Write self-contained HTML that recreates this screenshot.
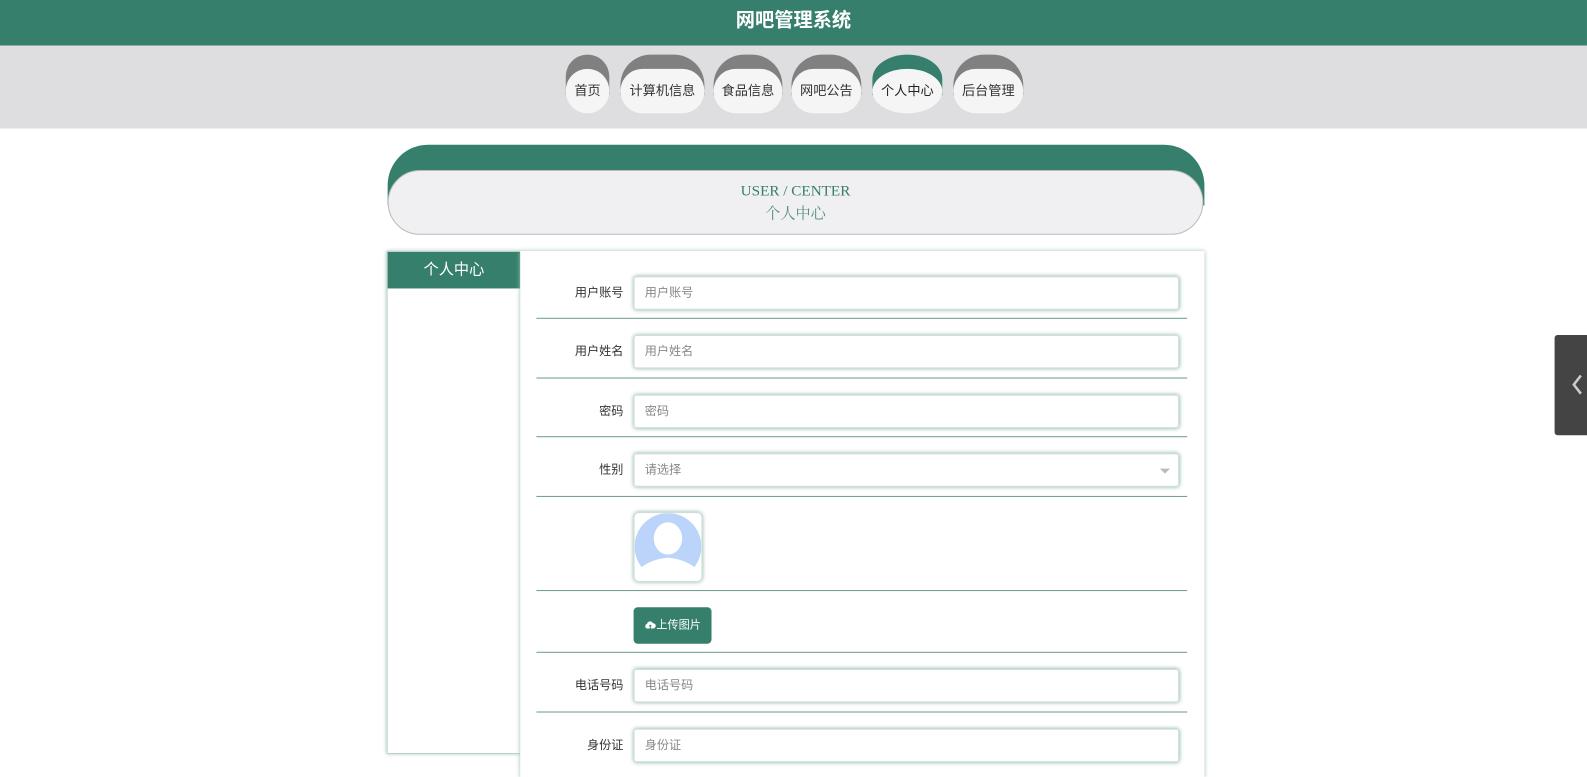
<!DOCTYPE html>
<html><head><meta charset="utf-8"><style>
*{box-sizing:border-box;margin:0;padding:0}
body{width:1587px;height:761px;overflow:hidden;background:#fff;font-family:"Liberation Sans","Noto Sans CJK SC",sans-serif;position:relative}
#w{position:absolute;left:0;top:0;width:1568px;height:752px;transform:scale(1.0121);transform-origin:0 0}
.hdr{position:absolute;left:0;top:0;width:1568px;height:45px;background:#357f6c;color:#fff;font-size:19px;font-weight:bold;text-align:center;line-height:42px}
.nav{position:absolute;left:0;top:45px;width:1568px;height:82px;background:#dedde0}
.tab{position:absolute;top:9px;height:58px}
.tab .bg{position:absolute;left:0;top:0;right:0;height:40px;background:#808080;border-radius:30px 30px 0 0}
.tab .pill{position:absolute;left:0;right:0;top:14px;height:44px;background:#f5f5f5;border-radius:22px;font-size:13px;color:#333;text-align:center;line-height:44px}
.tab.act .bg{background:#357f6c;border-radius:50%/60% 60% 0 0}
.tab.act .pill{border-radius:50%;color:#222}
.ban{position:absolute;left:383px;top:143px;width:807px;height:60px;background:#357f6c;border-radius:40px 40px 0 0}
.banp{position:absolute;left:383px;top:168px;width:806px;height:64px;background:#f0f0f2;border:1px solid #bbb;border-radius:32px;text-align:center;font-family:"Liberation Serif","Noto Serif CJK SC",serif;color:#357f6c}
.left{position:absolute;left:382px;top:248px;width:133px;height:497px;border:1px solid #b9d3cb;box-shadow:0 0 4px #9fbfb5;background:#fff}
.left .h{height:36px;background:#357f6c;color:#fff;font-size:15px;text-align:center;line-height:36px}
.right{position:absolute;left:514px;top:248px;width:676px;height:520px;background:#fff;box-shadow:0 0 4px #9fbfb5}
.lbl{position:absolute;width:100px;left:516px;text-align:right;font-size:12px;color:#333;height:33px;line-height:33px}
.inp{position:absolute;left:626px;width:539px;height:33px;border:1px solid #cfe0da;border-radius:3px;box-shadow:0 0 4px #8fb3a8;font-size:12px;color:#888;padding-left:10px;line-height:31px;background:#fff}
.ln{position:absolute;left:530px;width:643px;height:1px;background:#6e9a8e}
</style></head><body><div id="w">
<div class="hdr">网吧管理系统</div>
<div class="nav">
<div class="tab" style="left:559px;width:43px"><div class="bg"></div><div class="pill">首页</div></div>
<div class="tab" style="left:613px;width:83px"><div class="bg"></div><div class="pill">计算机信息</div></div>
<div class="tab" style="left:705px;width:68px"><div class="bg"></div><div class="pill">食品信息</div></div>
<div class="tab" style="left:782px;width:69px"><div class="bg"></div><div class="pill">网吧公告</div></div>
<div class="tab act" style="left:862px;width:69px"><div class="bg"></div><div class="pill">个人中心</div></div>
<div class="tab" style="left:942px;width:69px"><div class="bg"></div><div class="pill">后台管理</div></div>
</div>
<div class="ban"></div>
<div class="banp"><div style="font-size:15px;margin-top:12px">USER / CENTER</div><div style="font-size:15px;margin-top:2px;color:#5a8f80">个人中心</div></div>
<div class="left"><div class="h">个人中心</div></div>
<div class="right"></div>
<div class="lbl" style="top:273px">用户账号</div><div class="inp" style="top:273px">用户账号</div><div class="ln" style="top:314px"></div>
<div class="lbl" style="top:331px">用户姓名</div><div class="inp" style="top:331px">用户姓名</div><div class="ln" style="top:373px"></div>
<div class="lbl" style="top:390px">密码</div><div class="inp" style="top:390px">密码</div><div class="ln" style="top:431px"></div>
<div class="lbl" style="top:448px">性别</div><div class="inp" style="top:448px">请选择<span style="position:absolute;right:8px;top:14px;border:5px solid transparent;border-top-color:#bbb;border-bottom:0"></span></div><div class="ln" style="top:490px"></div>
<div style="position:absolute;left:626px;top:506px;width:68px;height:69px;border:1px solid #cfe0da;border-radius:5px;box-shadow:0 0 4px #8fb3a8;background:#fff;overflow:hidden">
<svg width="66" height="67" viewBox="0 0 66 67"><circle cx="33" cy="33" r="33" fill="#bcd4fa"/><ellipse cx="33" cy="25" rx="14" ry="16" fill="#fff"/><path d="M4 56 Q14 46 33 44 Q52 46 62 56 L62 67 L4 67Z" fill="#fff"/></svg></div>
<div class="ln" style="top:583px"></div>
<div style="position:absolute;left:626px;top:600px;width:77px;height:36px;background:#357f6c;border-radius:4px;color:#fff;font-size:11px;line-height:36px;text-align:center"><svg width="11" height="9" viewBox="0 0 11 9" style="vertical-align:-1px;margin-right:1px"><path d="M2.5 8 A2.3 2.3 0 0 1 2.3 3.5 A3 3 0 0 1 8 2.8 A2.6 2.6 0 0 1 8.6 8 Z" fill="#fff"/><path d="M5.5 4 L3.8 5.8 H5 V8 H6 V5.8 H7.2Z" fill="#357f6c"/></svg>上传图片</div>
<div class="ln" style="top:644px"></div>
<div class="lbl" style="top:661px">电话号码</div><div class="inp" style="top:661px">电话号码</div><div class="ln" style="top:703px"></div>
<div class="lbl" style="top:720px">身份证</div><div class="inp" style="top:720px">身份证</div>
<div style="position:absolute;left:1536px;top:331px;width:40px;height:99px;background:#444;border-radius:3px 0 0 3px"><svg width="40" height="99"><path d="M26 40 L19 49 L26 58" stroke="#ccc" stroke-width="2.5" fill="none"/></svg></div>
</div></body></html>
